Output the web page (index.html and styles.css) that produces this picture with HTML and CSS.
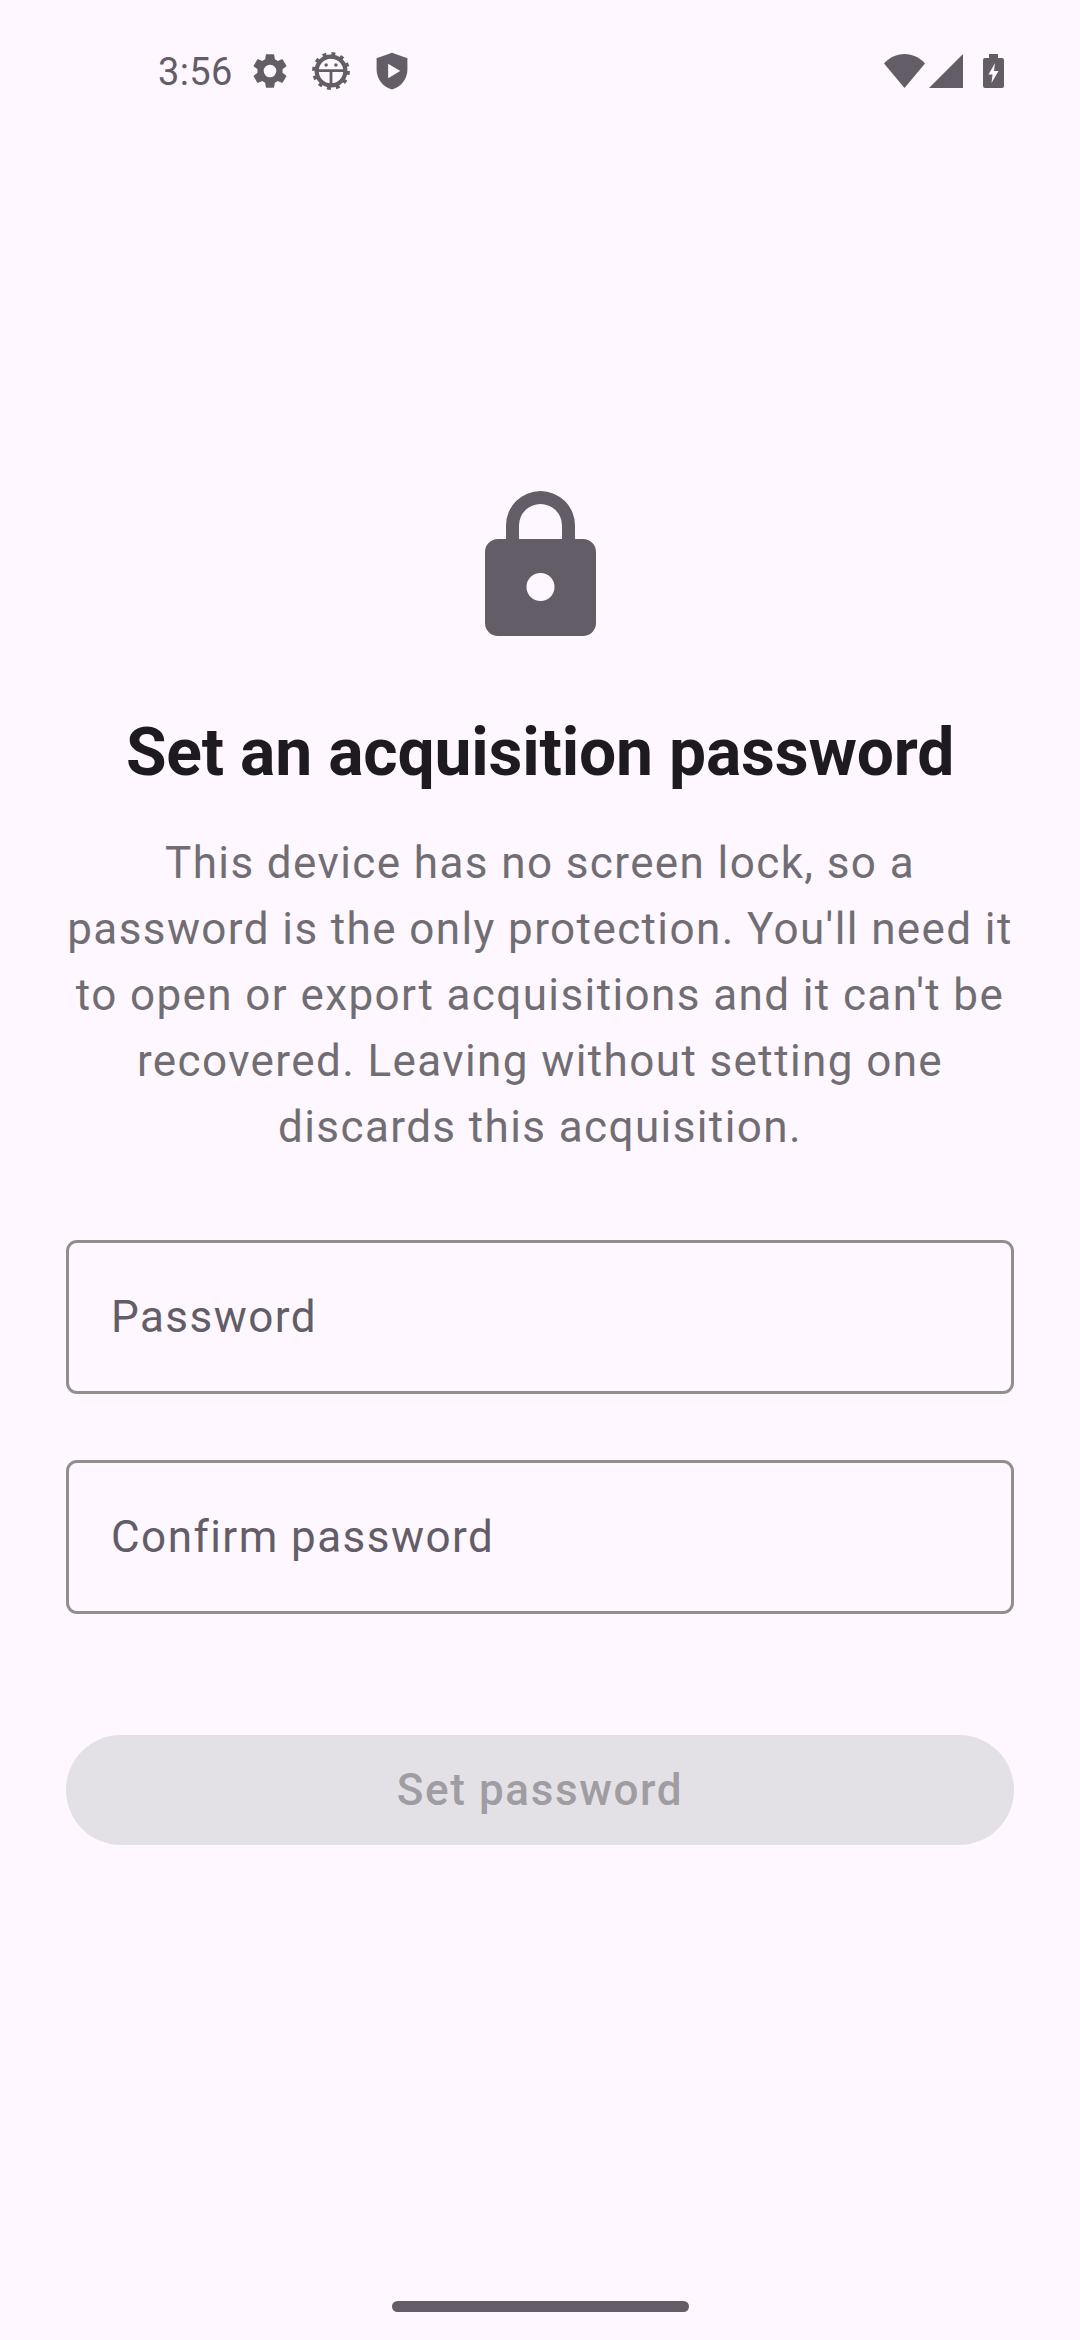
FILE: index.html
```html
<!DOCTYPE html>
<html>
	<head>
		<meta charset="utf8"/>
		<title>Set an acquisition password</title>
		<link rel="stylesheet" href="styles.css">
	</head>
	<body>
		<div class="statusBar">
			<div class="statusLeft">
				<span class="clock">3:56</span>
				<svg class="statusIcon" viewBox="0 0 24 24"><path fill-rule="evenodd" d="M19.14 12.94c.04-.3.06-.61.06-.94s-.02-.64-.07-.94l2.03-1.58a.49.49 0 0 0 .12-.61l-1.92-3.32a.49.49 0 0 0-.59-.22l-2.39.96a7 7 0 0 0-1.62-.94l-.36-2.54a.48.48 0 0 0-.48-.41h-3.84a.47.47 0 0 0-.47.41l-.36 2.54c-.59.24-1.13.57-1.62.94l-2.39-.96a.48.48 0 0 0-.59.22L2.74 8.87a.48.48 0 0 0 .12.61l2.03 1.58c-.05.3-.09.63-.09.94s.02.64.07.94l-2.03 1.58a.49.49 0 0 0-.12.61l1.92 3.32c.12.22.37.29.59.22l2.39-.96c.5.38 1.03.7 1.62.94l.36 2.54c.05.24.24.41.48.41h3.84c.24 0 .44-.17.47-.41l.36-2.54c.59-.24 1.13-.56 1.62-.94l2.39.96c.22.08.47 0 .59-.22l1.92-3.32a.48.48 0 0 0-.12-.61zM12 15.6a3.6 3.6 0 1 1 0-7.2 3.6 3.6 0 0 1 0 7.2z"/></svg>
				<svg class="statusIcon" viewBox="0 0 24 24">
					<circle class="ring" cx="12" cy="12" r="8.200"/>
					<circle class="teeth" cx="12" cy="12" r="9.800"/>
					<path d="M4 11h16v1.600h-7.200V20h-1.600v-7.400H4z"/>
					<circle cx="9.200" cy="8.600" r="1"/>
					<circle cx="14.800" cy="8.600" r="1"/>
				</svg>
				<svg class="statusIcon" viewBox="0 0 24 24"><path fill-rule="evenodd" d="M12 1.500 3.200 4.700v6.600c0 5.200 3.800 10 8.800 11.200 5-1.200 8.800-6 8.800-11.200V4.700zM9.800 7.800l6.900 4.200-6.900 4.200z"/></svg>
			</div>
			<div class="statusRight">
				<svg class="wifi" viewBox="0 0 41 34"><path d="M0 9.500C5.400 3.500 12.600 0 20.500 0S35.600 3.500 41 9.500L20.500 34z"/></svg>
				<svg class="signal" viewBox="0 0 34 34"><path d="M34 0v34H0z"/></svg>
				<svg class="battery" viewBox="0 0 21 34"><path fill-rule="evenodd" d="M6 0h9v4h4a2 2 0 0 1 2 2v26a2 2 0 0 1-2 2H2a2 2 0 0 1-2-2V6a2 2 0 0 1 2-2h4zM12 9 5.500 20.500h4L8.500 29l7-12H11z"/></svg>
			</div>
		</div>

		<div class="content">
			<svg class="lock" viewBox="0 0 111 145"><path fill-rule="evenodd" d="M21 48V34.500a34.500 34.500 0 0 1 69 0V48h8a13 13 0 0 1 13 13v71a13 13 0 0 1-13 13H13a13 13 0 0 1-13-13V61a13 13 0 0 1 13-13zM34 48h43V34.500a21.500 21.500 0 0 0-43 0zM55.500 82a14 14 0 1 0 0 28 14 14 0 0 0 0-28z"/></svg>
			<h1 class="title">Set an acquisition password</h1>
			<p class="description">This device has no screen lock, so a password is the only protection. You'll need it to open or export acquisitions and it can't be recovered. Leaving without setting one discards this acquisition.</p>
			<div class="field">Password</div>
			<div class="field">Confirm password</div>
			<div class="button">Set password</div>
		</div>

		<div class="navHandle"></div>
	</body>
</html>
```

FILE: styles.css
```css
* {
	box-sizing : border-box;
}

html, body {
	height : 100%;
	margin : 0;
}

body {
	display        : flex;
	flex-direction : column;
	background     : #fef7ff;
	color          : #625d67;
	font-family    : Roboto, sans-serif;
}

.statusBar {
	display         : flex;
	align-items     : center;
	justify-content : space-between;
	height          : 142px;
	padding         : 0 76px 0 158px;
}

.statusLeft, .statusRight {
	display     : flex;
	align-items : center;
}

.clock {
	padding-top    : 2px;
	margin-right   : 16px;
	font-size      : 38px;
	letter-spacing : .4px;
}

.statusIcon {
	width        : 42px;
	height       : 42px;
	margin-right : 19px;
	fill         : #625d67;
}

.ring {
	fill         : none;
	stroke       : #625d67;
	stroke-width : 2.400;
}

.teeth {
	fill             : none;
	stroke           : #625d67;
	stroke-width     : 2;
	stroke-dasharray : 2.200 2.930;
}

.wifi {
	width  : 41px;
	height : 34px;
	fill   : #625d67;
}

.signal {
	width       : 34px;
	height      : 34px;
	margin-left : 4px;
	fill        : #625d67;
}

.battery {
	width       : 21px;
	height      : 34px;
	margin-left : 20px;
	fill        : #625d67;
}

.content {
	display        : flex;
	flex-direction : column;
	align-items    : center;
	flex           : 1;
	padding        : 349px 66px 0;
}

.lock {
	width  : 111px;
	height : 145px;
	fill   : #625d67;
}

.title {
	margin         : 73px 0 0;
	font-size      : 66px;
	font-weight    : 700;
	line-height    : 88px;
	letter-spacing : -.2px;
	color          : #1d1b20;
	text-align     : center;
}

.description {
	margin         : 33px 0 0;
	font-size      : 44px;
	line-height    : 66px;
	letter-spacing : 1.400px;
	text-align     : center;
	color          : #716e73;
}

.field {
	display        : flex;
	align-items    : center;
	width          : 100%;
	height         : 154px;
	margin-top     : 66px;
	padding-left   : 42px;
	border         : 3px solid #958c8b;
	border-radius  : 11px;
	font-size      : 44px;
	letter-spacing : 1.450px;
}

.description + .field {
	margin-top : 80px;
}

.button {
	display         : flex;
	align-items     : center;
	justify-content : center;
	width           : 100%;
	height          : 110px;
	margin-top      : 121px;
	border-radius   : 55px;
	background      : #e4e1e6;
	color           : #a09da2;
	font-size       : 44px;
	font-weight     : 500;
	letter-spacing  : 1.600px;
}

.navHandle {
	align-self    : center;
	width         : 297px;
	height        : 11px;
	margin-bottom : 28px;
	border-radius : 6px;
	background    : #625d67;
}
```
